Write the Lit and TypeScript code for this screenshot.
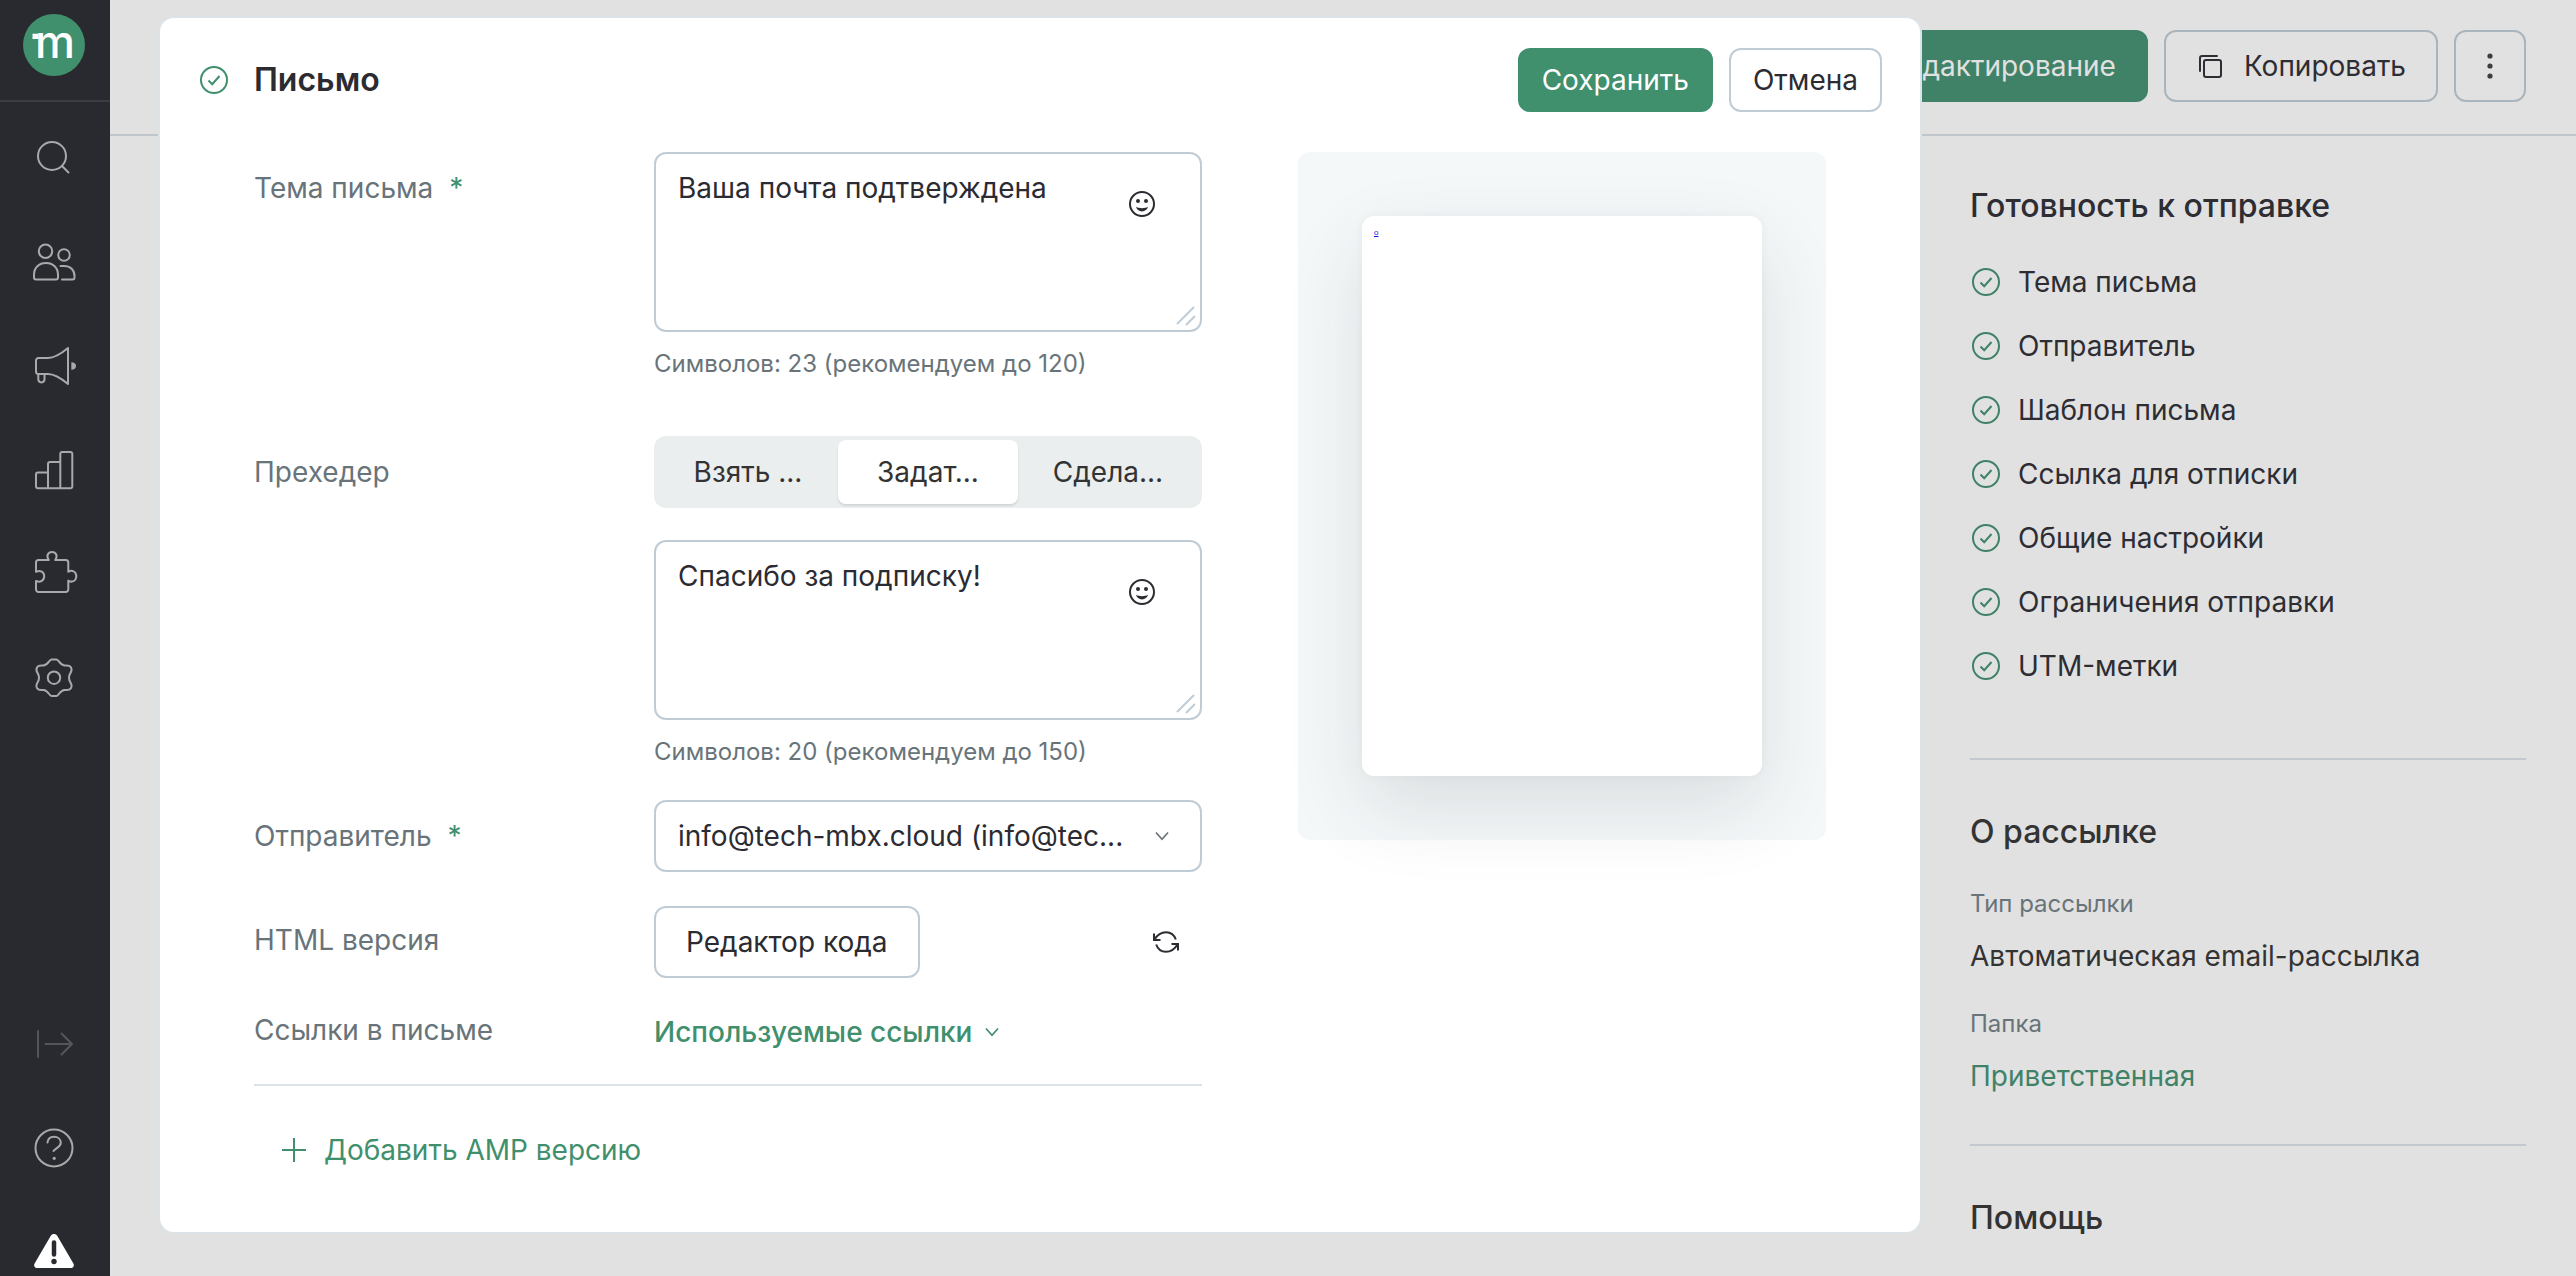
import { LitElement, html, css, svg } from "lit";
import { customElement, property, state } from "lit/decorators.js";

const checkIcon = html`<svg class="check" viewBox="0 0 28 28" width="28" height="28" fill="none" stroke="currentColor" stroke-width="2" aria-hidden="true">
  <circle cx="14" cy="14" r="13"></circle>
  <path d="M8.5 14.5l3.7 3.7 7.3-8.2"></path>
</svg>`;

const chevronIcon = html`<svg class="chevron" viewBox="0 0 16 16" width="16" height="16" fill="none" stroke="currentColor" stroke-width="1.7" aria-hidden="true">
  <path d="M2 4.5l6 6.7 6-6.7"></path>
</svg>`;

const navIcons: Record<string, unknown> = {
  search: svg`<circle cx="21" cy="22" r="14"></circle><path d="M31 32l6.5 6.5"></path>`,
  people: svg`<circle cx="14.5" cy="13.3" r="6.7"></circle>
    <path d="M5 41.6h20a2 2 0 0 0 2-2v-3c0-7-5-11.6-12-11.6s-12 4.6-12 11.6v3a2 2 0 0 0 2 2z"></path>
    <circle cx="33" cy="17" r="5.8"></circle>
    <path d="M29.5 28h3.5c6.5 0 10.5 4 10.5 10v1.6a2 2 0 0 1-2 2H31"></path>`,
  campaigns: svg`<path d="M5 18.5a2.5 2.5 0 0 1 2.5-2.5H17c7 0 14-5 20-10v36c-6-5-13-10-20-10H7.5A2.5 2.5 0 0 1 5 29.5z"></path>
    <path d="M7.3 32v5.3a3.1 3.1 0 0 0 6.2 0V32"></path>
    <path class="solid dot" d="M40.3 20.2c3 0 4.700 1.7 4.700 3.800s-1.700 3.800-4.700 3.800z"></path>`,
  reports: svg`<path d="M17 42V18a2 2 0 0 1 2-2h10M29.3 42V8a2 2 0 0 1 2-2h8a2 2 0 0 1 2 2v32.2a2 2 0 0 1-2 2H7a2 2 0 0 1-2-2V28.5a2 2 0 0 1 2-2h10"></path>`,
  integrations: svg`<path d="M17.8 10C14.8 6 17 2 21 2s6.2 4 3.2 8h10.6a2.5 2.5 0 0 1 2.5 2.5v9.3c4-2.5 8 .2 8 4.5s-4 6.8-8 4.3v8.9a2.5 2.5 0 0 1-2.5 2.5H7.5A2.5 2.5 0 0 1 5 39.5v-8.6c4.5 2.2 8.2-.6 8.2-4.6s-3.7-6.8-8.2-4.5v-9.3A2.5 2.5 0 0 1 7.5 10z"></path>`,
  settings: svg`<g transform="translate(23 23.7)"><circle r="6.2"></circle>
    <path d="M-2.5-18.2h5c2.5 0 3 5.6 8 5.9 2.8.2 5-.6 6.4 1.8 2.6 4.6-1.9 5-1.9 10.5s4.5 5.9 1.9 10.5c-1.4 2.4-3.6 1.6-6.4 1.8-5 .3-5.5 5.9-8 5.9h-5c-2.5 0-3-5.6-8-5.9-2.8-.2-5 .6-6.4-1.8-2.6-4.6 1.9-5 1.9-10.5s-4.5-5.9-1.9-10.5c1.4-2.4 3.6-1.6 6.4-1.8 5-.3 5.5-5.9 8-5.9z"></path></g>`,
  expand: svg`<path d="M7 11v26M14.5 24H41M30.5 13.5L41 24 30.5 34.5"></path>`,
  help: svg`<circle cx="23" cy="24" r="18.5"></circle>
    <path d="M16.5 18.5c.3-3.6 3-5.7 6.5-5.7 3.8 0 6.8 2.4 6.8 6 0 4.700-5.300 5-7.300 8.200"></path>
    <circle class="solid dot" cx="23.2" cy="34.3" r="1.6"></circle>`,
  warning: svg`<path class="solid dot" d="M19.8 7.800c1.400-2.400 5-2.400 6.400 0l16.200 27.600c1.200 2.200-.2 4.600-2.800 4.600H6.400c-2.600 0-4-2.400-2.800-4.600z"></path>
    <path d="M23 14.5v12" stroke="#292a2f" stroke-width="4.5"></path>
    <circle cx="23" cy="33.5" r="2.7" fill="#292a2f" stroke="none"></circle>`,
};

@customElement("app-sidebar")
class AppSidebar extends LitElement {
  static styles = css`
    :host {
      display: flex;
      flex-direction: column;
      flex: none;
      width: 110px;
      height: 100vh;
      overflow: hidden;
      background: #292a2f;
      color: #a9a9ab;
    }
    .logo {
      display: flex;
      justify-content: center;
      padding: 14px 2px 24px 0;
      border-bottom: 2px solid #3b3c41;
    }
    .logo svg {
      display: block;
    }
    .logo text {
      font: 500 45px Inter, "Liberation Sans", sans-serif;
    }
    nav {
      display: flex;
      flex-direction: column;
      align-items: center;
      gap: 56px;
    }
    .main {
      padding-top: 32px;
    }
    .extra {
      margin-top: auto;
    }
    a {
      display: block;
      width: 48px;
      height: 48px;
      color: inherit;
    }
    .dim {
      color: #55565a;
    }
    .alert {
      color: #fff;
    }
    svg {
      display: block;
      stroke-linecap: round;
      stroke-linejoin: round;
    }
    .solid {
      fill: currentColor;
    }
    .dot {
      stroke: none;
    }
  `;

  private item(icon: string, label: string, tone = "") {
    return html`<a class=${tone} href="#${icon}" aria-label=${label}>
      <svg viewBox="0 0 48 48" width="48" height="48" fill="none" stroke="currentColor" stroke-width="2" aria-hidden="true">${navIcons[icon]}</svg>
    </a>`;
  }

  render() {
    return html`
      <div class="logo">
        <svg viewBox="0 0 62 62" width="62" height="62" role="img" aria-label="m">
          <circle cx="31" cy="31" r="31" fill="#408f6d"></circle>
          <rect x="9.5" y="19.7" width="6" height="5.3" fill="#fff"></rect>
          <text x="32" y="44" text-anchor="middle" fill="#fff">m</text>
        </svg>
      </div>
      <nav class="main">
        ${this.item("search", "Поиск")}
        ${this.item("people", "Аудитория")}
        ${this.item("campaigns", "Рассылки")}
        ${this.item("reports", "Отчёты")}
        ${this.item("integrations", "Интеграции")}
        ${this.item("settings", "Настройки")}
      </nav>
      <nav class="extra">
        ${this.item("expand", "Развернуть", "dim")}
        ${this.item("help", "Помощь")}
        ${this.item("warning", "Внимание", "alert")}
      </nav>
    `;
  }
}

@customElement("text-field")
class TextField extends LitElement {
  @property() name = "";
  @property() label = "";
  @property() value = "";
  @property({ type: Number }) limit = 0;

  static styles = css`
    :host {
      display: block;
    }
    .box {
      position: relative;
    }
    textarea {
      display: block;
      box-sizing: border-box;
      width: 100%;
      height: 180px;
      margin: 0;
      padding: 14px 80px 14px 22px;
      border: 2px solid #c0ccd5;
      border-radius: 12px;
      outline: none;
      resize: none;
      background: #fff;
      color: #2b2b31;
      font: 400 28px/40px Inter, "Liberation Sans", sans-serif;
    }
    .emoji {
      position: absolute;
      top: 32px;
      right: 40px;
      width: 40px;
      height: 40px;
      padding: 0;
      border: 0;
      background: none;
      color: #2b2b31;
      cursor: pointer;
    }
    .emoji svg {
      display: block;
    }
    .grip {
      position: absolute;
      right: 4px;
      bottom: 4px;
      color: #c0ccd5;
    }
    .hint {
      margin: 18px 0 0;
      color: #687479;
      font-size: 24px;
      line-height: 28px;
    }
  `;

  private onInput(e: InputEvent) {
    this.value = (e.target as HTMLTextAreaElement).value;
  }

  render() {
    return html`
      <div class="box">
        <textarea name=${this.name} aria-label=${this.label} .value=${this.value} @input=${this.onInput}></textarea>
        <button class="emoji" type="button" aria-label="Эмодзи">
          <svg viewBox="0 0 40 40" width="40" height="40" fill="none" stroke="currentColor" stroke-width="2" aria-hidden="true">
            <circle cx="20" cy="20" r="12"></circle>
            <circle cx="16" cy="17" r="2" fill="currentColor" stroke="none"></circle>
            <circle cx="24" cy="17" r="2" fill="currentColor" stroke="none"></circle>
            <path d="M14 22.8c1.6 1 3.6 1.400 6 1.400s4.400-.4 6-1.400c-.7 2.800-3 4.600-6 4.600s-5.300-1.800-6-4.600z" fill="currentColor" stroke="none"></path>
          </svg>
        </button>
        <svg class="grip" viewBox="0 0 22 22" width="22" height="22" fill="none" stroke="currentColor" stroke-width="2" aria-hidden="true">
          <path d="M1 18L18 1M10 19l9-9"></path>
        </svg>
      </div>
      <p class="hint">Символов: ${this.value.length} (рекомендуем до ${this.limit})</p>
    `;
  }
}

@customElement("letter-dialog")
class LetterDialog extends LitElement {
  @state() private preheader = 1;

  private modes = ["Взять ...", "Задат...", "Сдела..."];

  static styles = css`
    :host {
      display: block;
      box-sizing: border-box;
      border: 2px solid #dbe3e7;
      border-radius: 16px;
      background: #fff;
      color: #2b2b31;
      padding-bottom: 62px;
      font-size: 28px;
      line-height: 40px;
    }
    header {
      display: flex;
      align-items: center;
      gap: 16px;
      padding: 30px 38px 40px 40px;
    }
    .check {
      flex: none;
      margin-right: 10px;
      color: #408f6d;
    }
    h2 {
      flex: 1;
      margin: 0;
      font-size: 32px;
      line-height: 40px;
      font-weight: 600;
    }
    button,
    select {
      font: inherit;
      color: inherit;
      margin: 0;
    }
    button {
      cursor: pointer;
    }
    .btn {
      box-sizing: border-box;
      height: 64px;
      padding: 0 22px;
      border: 2px solid #c0ccd5;
      border-radius: 12px;
      background: #fff;
    }
    .primary {
      border-color: #408f6d;
      background: #408f6d;
      color: #fff;
    }
    .tall {
      height: 72px;
      padding: 0 30px;
    }
    .body {
      display: grid;
      grid-template-columns: minmax(0, 1fr) 528px;
      align-items: start;
      gap: 96px;
      padding: 0 94px;
    }
    .fields {
      display: grid;
      gap: 34px;
    }
    .row {
      display: grid;
      grid-template-columns: 400px minmax(0, 1fr);
    }
    .spaced {
      padding-bottom: 24px;
    }
    .label {
      padding-top: 16px;
      color: #687479;
    }
    .snug {
      padding-top: 14px;
    }
    .flat {
      padding-top: 0;
      line-height: 36px;
    }
    .required {
      margin-left: 8px;
      color: #408f6d;
    }
    .stack {
      display: grid;
      gap: 32px;
    }
    .segments {
      display: grid;
      grid-template-columns: repeat(3, minmax(0, 1fr));
      padding: 4px;
      border-radius: 12px;
      background: #eaeeef;
      color: #333;
    }
    .segments label {
      padding: 12px 0;
      border-radius: 8px;
      text-align: center;
      cursor: pointer;
    }
    .segments label:has(input:checked) {
      background: #fff;
      box-shadow: 0 2px 2px rgba(0, 0, 0, 0.1);
    }
    .segments input {
      position: absolute;
      opacity: 0;
      pointer-events: none;
    }
    .select {
      position: relative;
    }
    .select select {
      box-sizing: border-box;
      width: 100%;
      height: 72px;
      padding: 0 72px 0 22px;
      border: 2px solid #c0ccd5;
      border-radius: 12px;
      background: #fff;
      appearance: none;
    }
    .select .chevron {
      position: absolute;
      top: 28px;
      right: 32px;
      color: #687479;
      pointer-events: none;
    }
    .split {
      display: flex;
      justify-content: space-between;
    }
    .refresh {
      width: 72px;
      height: 72px;
      padding: 0;
      border: 0;
      background: none;
    }
    .refresh svg {
      display: block;
      margin: auto;
    }
    .link {
      display: flex;
      align-items: center;
      gap: 12px;
      padding: 0;
      border: 0;
      background: none;
      color: #408f6d;
    }
    .strong {
      font-weight: 500;
    }
    .footer {
      margin-top: 32px;
      padding: 44px 28px 0;
      border-top: 2px solid #dbe3e7;
    }
    .add {
      gap: 18px;
    }
    .preview {
      padding: 64px;
      border-radius: 12px;
      background: #f4f8f9;
    }
    .sheet {
      height: 560px;
      border-radius: 12px;
      background: #fff;
      box-shadow: 0 32px 80px rgba(45, 45, 50, 0.12), 0 0 8px rgba(40, 50, 65, 0.05);
    }
    .sheet a {
      display: block;
      width: 8px;
      padding: 12px 0 0 12px;
      color: #1a10ee;
      font: 8px/10px "Liberation Sans", sans-serif;
    }
  `;

  render() {
    return html`
      <header>
        ${checkIcon}
        <h2>Письмо</h2>
        <button class="btn primary" type="submit">Сохранить</button>
        <button class="btn" type="button">Отмена</button>
      </header>
      <div class="body">
        <div>
          <div class="fields">
            <div class="row spaced">
              <div class="label">Тема письма <span class="required">*</span></div>
              <text-field name="subject" label="Тема письма" value="Ваша почта подтверждена" limit="120"></text-field>
            </div>
            <div class="row">
              <div class="label">Прехедер</div>
              <div class="stack">
                <div class="segments" role="radiogroup" aria-label="Прехедер">
                  ${this.modes.map(
                    (mode, i) => html`<label>
                      <input type="radio" name="preheader" .checked=${i === this.preheader} @change=${() => (this.preheader = i)} />${mode}</label>`
                  )}
                </div>
                <text-field name="preheader-text" label="Прехедер" value="Спасибо за подписку!" limit="150"></text-field>
              </div>
            </div>
            <div class="row">
              <label class="label" for="sender">Отправитель <span class="required">*</span></label>
              <div class="select">
                <select id="sender">
                  <option>info@tech-mbx.cloud (info@tec...</option>
                </select>
                ${chevronIcon}
              </div>
            </div>
            <div class="row">
              <div class="label snug">HTML версия</div>
              <div class="split">
                <button class="btn tall" type="button">Редактор кода</button>
                <button class="refresh" type="button" aria-label="Обновить">
                  <svg viewBox="0 0 28 28" width="28" height="28" fill="none" stroke="currentColor" stroke-width="2" aria-hidden="true">
                    <path d="M2 5.5v6.5h6.5M2.5 11.5C5.5 6.5 9.5 4.2 14 4.2c4.7 0 8.3 2.8 9.8 7.3M26 22.5V16h-6.5M25.5 16.5c-3 5-7 7.3-11.5 7.3-4.700 0-8.300-2.800-9.800-7.300"></path>
                  </svg>
                </button>
              </div>
            </div>
            <div class="row">
              <div class="label flat">Ссылки в письме</div>
              <button class="link strong" type="button">Используемые ссылки ${chevronIcon}</button>
            </div>
          </div>
          <div class="footer">
            <button class="link add" type="button">
              <svg viewBox="0 0 24 24" width="24" height="24" stroke="currentColor" stroke-width="2" aria-hidden="true"><path d="M12 0v24M0 12h24"></path></svg>
              Добавить AMP версию
            </button>
          </div>
        </div>
        <div class="preview">
          <div class="sheet"><a href="#preview">o</a></div>
        </div>
      </div>
    `;
  }
}

@customElement("app-root")
class AppRoot extends LitElement {
  private checks = [
    "Тема письма",
    "Отправитель",
    "Шаблон письма",
    "Ссылка для отписки",
    "Общие настройки",
    "Ограничения отправки",
    "UTM-метки",
  ];

  static styles = css`
    :host {
      display: flex;
      min-height: 100vh;
      background: #e1e1e1;
      color: #2d2d33;
      font-family: Inter, "Liberation Sans", sans-serif;
      font-size: 28px;
      line-height: 40px;
    }
    .page {
      position: relative;
      flex: 1;
      min-width: 0;
    }
    .topbar {
      display: flex;
      justify-content: flex-end;
      gap: 16px;
      padding: 30px 50px 32px;
      border-bottom: 2px solid #c0c7cc;
    }
    button {
      display: flex;
      align-items: center;
      box-sizing: border-box;
      height: 72px;
      margin: 0;
      padding: 0 30px;
      border: 2px solid #a9b4bc;
      border-radius: 12px;
      background: none;
      color: inherit;
      font: inherit;
      cursor: pointer;
    }
    .edit {
      border-color: #408267;
      background: #408267;
      color: #e1e1e1;
    }
    .copy {
      gap: 20px;
    }
    .more {
      justify-content: center;
      width: 72px;
      padding: 0;
    }
    .info {
      box-sizing: border-box;
      width: 654px;
      margin-left: auto;
      padding: 50px 50px 0 48px;
    }
    section + section {
      border-top: 2px solid #c3c9cf;
    }
    h3 {
      margin: 0;
      font-size: 32px;
      line-height: 40px;
      font-weight: 500;
    }
    ul {
      display: grid;
      gap: 24px;
      margin: 0;
      padding: 36px 0 72px;
      list-style: none;
    }
    li {
      display: flex;
      align-items: center;
      gap: 18px;
    }
    .check {
      margin-left: 2px;
      color: #408267;
    }
    .about {
      padding: 52px 0 48px;
      color: #333;
    }
    dl {
      margin: 36px 0 0;
    }
    dt {
      color: #687479;
      font-size: 24px;
      line-height: 32px;
    }
    dd {
      margin: 0;
      padding: 16px 0 32px;
    }
    dd:last-child {
      padding-bottom: 0;
    }
    dd a {
      color: #408267;
      text-decoration: none;
    }
    .help {
      padding-top: 52px;
      color: #333;
    }
    .dialog {
      position: absolute;
      top: 16px;
      left: 48px;
      right: 654px;
    }
  `;

  render() {
    return html`
      <app-sidebar></app-sidebar>
      <div class="page">
        <div class="topbar">
          <button class="edit" type="button">Редактирование</button>
          <button class="copy" type="button">
            <svg viewBox="0 0 28 28" width="28" height="28" fill="none" stroke="currentColor" stroke-width="2" stroke-linecap="round" aria-hidden="true">
              <rect x="8" y="8" width="17" height="17" rx="2"></rect>
              <path d="M4 19V6a2 2 0 0 1 2-2h15"></path>
            </svg>
            Копировать
          </button>
          <button class="more" type="button" aria-label="Ещё">
            <svg viewBox="0 0 28 28" width="28" height="28" fill="#3c3c42" aria-hidden="true">
              <circle cx="14" cy="4" r="2.6"></circle>
              <circle cx="14" cy="14" r="2.6"></circle>
              <circle cx="14" cy="24" r="2.6"></circle>
            </svg>
          </button>
        </div>
        <aside class="info">
          <section>
            <h3>Готовность к отправке</h3>
            <ul>
              ${this.checks.map((name) => html`<li>${checkIcon}${name}</li>`)}
            </ul>
          </section>
          <section class="about">
            <h3>О рассылке</h3>
            <dl>
              <dt>Тип рассылки</dt>
              <dd>Автоматическая email-рассылка</dd>
              <dt>Папка</dt>
              <dd><a href="#folder">Приветственная</a></dd>
            </dl>
          </section>
          <section class="help">
            <h3>Помощь</h3>
          </section>
        </aside>
        <letter-dialog class="dialog" role="dialog" aria-label="Письмо"></letter-dialog>
      </div>
    `;
  }
}
